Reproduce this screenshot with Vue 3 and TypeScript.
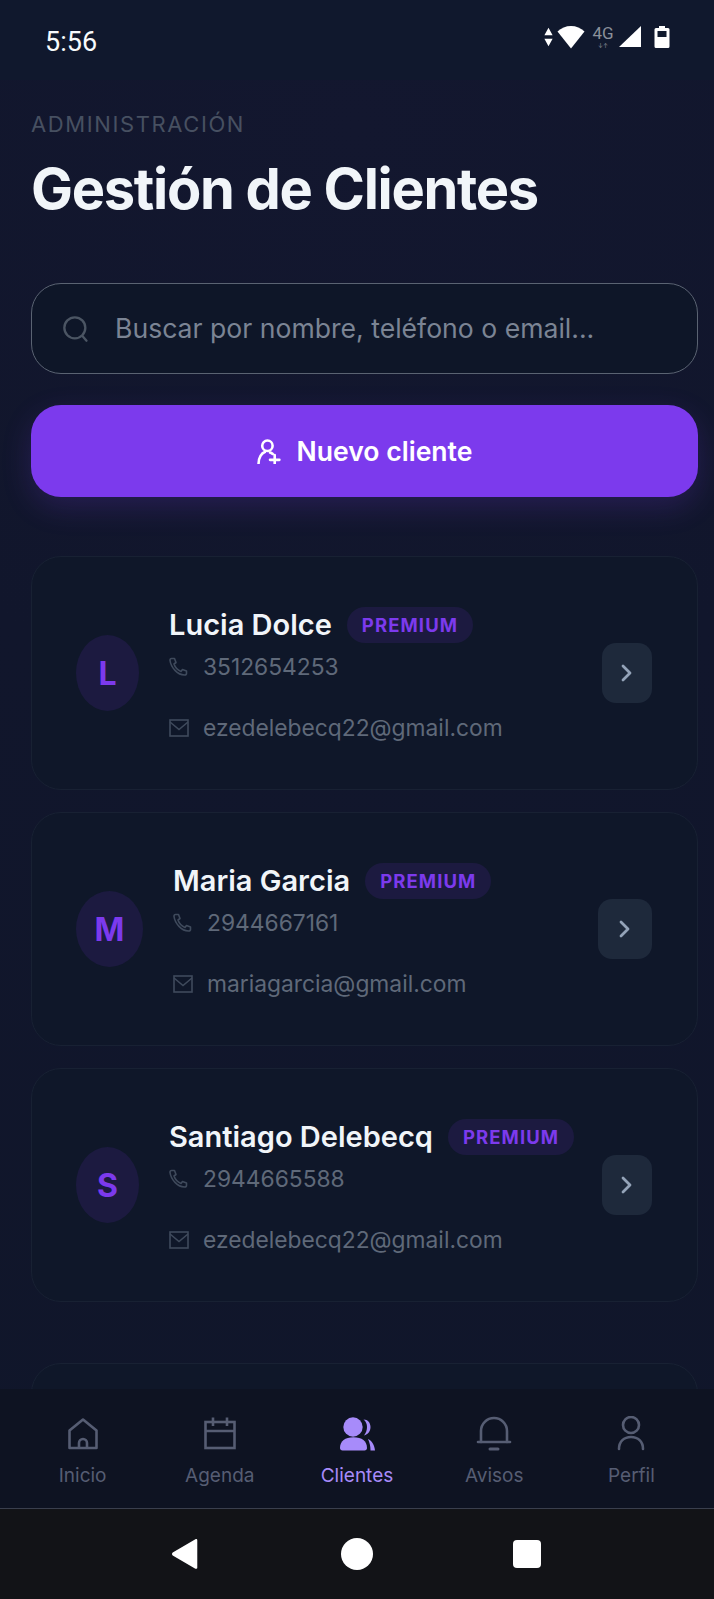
<script setup lang="ts">
interface Client { name: string; initial: string; phone: string; email: string; avatar: number; action: number; info: number }
const clients: Client[] = [
  { name: 'Lucia Dolce', initial: 'L', phone: '3512654253', email: 'ezedelebecq22@gmail.com', avatar: 63, action: 50, info: 402 },
  { name: 'Maria Garcia', initial: 'M', phone: '2944667161', email: 'mariagarcia@gmail.com', avatar: 67, action: 54, info: 394 },
  { name: 'Santiago Delebecq', initial: 'S', phone: '2944665588', email: 'ezedelebecq22@gmail.com', avatar: 63, action: 50, info: 402 },
]
const tabs = ['Inicio', 'Agenda', 'Clientes', 'Avisos', 'Perfil']
</script>

<template>
  <div class="phone">
    <div class="status">
      <span class="time">5:56</span>
      <div class="status-icons">
        <svg width="11" height="22" viewBox="0 0 12 22"><path d="M6 1 10.500 9h-9zM6 21 1.500 13h9z" fill="#fff"/></svg>
        <svg class="wifi" width="28" height="24" viewBox="0 0 28 24"><path d="M14 23.500 .5 6.500C4 3 9 1 14 1s10 2 13.500 5.500z" fill="#fff"/></svg>
        <div class="net"><span class="net-g">4G</span><span class="net-a">↓↑</span></div>
        <svg width="24" height="23" viewBox="0 0 24 23"><path d="M23 1v21H1z" fill="#fff"/></svg>
        <svg class="batt" width="16" height="23" viewBox="0 0 16 23"><path d="M5 1h6v2h3a1.500 1.500 0 0 1 1.500 1.500v17A1.500 1.500 0 0 1 14 23H2a1.500 1.500 0 0 1-1.500-1.500v-17A1.500 1.500 0 0 1 2 3h3z" fill="#fff"/><rect x="3.500" y="6" width="9" height="6" fill="#101a2e"/></svg>
      </div>
    </div>

    <main class="content">
      <p class="eyebrow">ADMINISTRACIÓN</p>
      <h1 class="title">Gestión de Clientes</h1>

      <div class="search">
        <svg class="search-icon" width="28" height="28" viewBox="0 0 24 24" fill="none" stroke="#4b5563" stroke-width="2" stroke-linecap="round"><circle cx="11" cy="11" r="9"/><path d="m21 22-3.500-4"/></svg>
        <span class="placeholder">Buscar por nombre, teléfono o email...</span>
      </div>

      <button class="new-btn">
        <svg width="25" height="25" viewBox="0 0 24 24" fill="none" stroke="#fff" stroke-width="2.500" stroke-linecap="round"><circle cx="10" cy="6.500" r="5"/><path d="M1.500 23.500c0-6 3-10 6-11M12.500 13c1 .3 1.800.8 2.500 1.300M17 15.500v9M12.500 20h9"/></svg>
        <span>Nuevo cliente</span>
      </button>

      <section class="list">
        <article v-for="c in clients" :key="c.name" class="card">
          <div class="avatar" :style="{ width: c.avatar + 'px' }">{{ c.initial }}</div>
          <div class="info" :style="{ width: c.info + 'px' }">
            <div class="name-row">
              <span class="name">{{ c.name }}</span>
              <span class="badge">PREMIUM</span>
            </div>
            <div class="line line-phone">
              <svg width="20" height="20" viewBox="0 0 20 20" fill="none" stroke="#3f4a5c" stroke-width="1.600" stroke-linecap="round" stroke-linejoin="round"><path d="M2.500 1.500h3l1.500 4-2 1.500c1 3 3.500 6 7 7.500l1.500-2 4 1.500v2.500c0 1-1 1.500-2 1.500C8.500 18 2 10.500 1 3.500c0-1 .5-2 1.500-2z"/></svg>
              <span>{{ c.phone }}</span>
            </div>
            <div class="line">
              <svg width="20" height="20" viewBox="0 0 20 20" fill="none" stroke="#3f4a5c" stroke-width="1.600"><rect x="1" y="2" width="18" height="16"/><path d="m1 4 9 7.500L19 4"/></svg>
              <span>{{ c.email }}</span>
            </div>
          </div>
          <div class="action" :style="{ width: c.action + 'px' }">
            <svg width="20" height="20" viewBox="0 0 20 20" fill="none" stroke="#94a3b8" stroke-width="2.800" stroke-linecap="round" stroke-linejoin="round"><path d="m6 3 7 7-7 7"/></svg>
          </div>
        </article>
        <article class="card card-next"></article>
      </section>
    </main>

    <nav class="tabs">
      <div v-for="(t, i) in tabs" :key="t" class="tab" :class="{ active: i === 2 }">
        <svg v-if="i === 0" width="36" height="36" viewBox="0 0 36 36" fill="none" stroke="currentColor" stroke-width="2.600" stroke-linejoin="round"><path d="M4.500 14.500 18 3.500l13.500 11V32h-27z"/><path d="M14 32v-5a4 4 0 0 1 8 0v5" /></svg>
        <svg v-else-if="i === 1" width="36" height="36" viewBox="0 0 36 36" fill="none" stroke="currentColor" stroke-width="2.600"><rect x="3.500" y="6" width="29" height="26"/><path d="M3.500 15h29M11 1.500V10M25 1.500V10"/></svg>
        <svg v-else-if="i === 2" width="36" height="36" viewBox="0 0 36 36" fill="currentColor"><circle cx="14" cy="11" r="9.700"/><path d="M1 32c0-7 5-10.800 13.500-10.800S28 25 28 32c0 1.500-1 2.500-2.500 2.500h-22C2 34.500 1 33.500 1 32z"/><path d="M24.500 3.500c4.500 0 7 3.500 7 7.500s-2.500 7.500-6.500 8.500c2-2.500 3-5.500 3-8.500s-1-5.500-3.500-7.500zM29 23c4 2 6.500 6 7 11.500h-4.500c0-4.500-.8-8-2.500-11.500z"/></svg>
        <svg v-else-if="i === 3" width="36" height="36" viewBox="0 0 36 36" fill="none" stroke="currentColor" stroke-width="2.600" stroke-linecap="round"><path d="M5 26V15a13 13 0 0 1 26 0v11"/><path d="M2 26h32"/><path d="M14 33h8" stroke-width="3"/></svg>
        <svg v-else width="36" height="36" viewBox="0 0 36 36" fill="none" stroke="currentColor" stroke-width="2.600" stroke-linecap="round"><circle cx="18" cy="9" r="8"/><path d="M6 33c0-7.500 5-12 12-12s12 4.500 12 12"/></svg>
        <span>{{ t }}</span>
      </div>
    </nav>

    <div class="sysbar">
      <svg width="32" height="34" viewBox="0 0 32 36"><path d="M29 3.500v29c0 1-1 1.500-2 1L3 19.500c-1-.8-1-2 0-3L27 2.500c1-.6 2-.2 2 1z" fill="#fff"/></svg>
      <div class="sys-home"></div>
      <div class="sys-square"></div>
    </div>
  </div>
</template>

<style>
html, body { margin: 0; background: #0f172a; }
</style>

<style scoped>
* { box-sizing: border-box; }
.phone {
  width: 714px;
  height: 1599px;
  display: flex;
  flex-direction: column;
  overflow: hidden;
  font-family: Inter, "Liberation Sans", sans-serif;
  background: radial-gradient(circle at 50% 8%, #13172f 0%, #11162c 40%, #10162a 100%);
}
.status {
  height: 80px;
  flex: none;
  display: flex;
  align-items: center;
  justify-content: space-between;
  padding: 0 44px 0 45px;
  background: #10182d;
}
.time { font-family: Roboto, sans-serif; font-size: 27px; color: #f8fafc; margin-top: 3px; }
.status-icons { display: flex; align-items: center; gap: 5px; margin-top: -7px; }
.wifi { margin-left: -2px; }
.net { width: 24px; margin: 0 -2px 0 1px; display: flex; flex-direction: column; align-items: center; line-height: 1; color: #8b909a; }
.net-g { font-size: 17px; font-family: Roboto, sans-serif; }
.net-a { font-size: 6px; margin-top: 1px; }
.batt { margin-left: 7px; }
.content { flex: 1; min-height: 0; overflow: hidden; padding: 30px 16px 0 31px; }
.eyebrow { margin: 0; font-size: 22px; line-height: 28px; letter-spacing: 1.600px; color: #475061; }
.title { margin: 18px 0 0; font-size: 56px; line-height: 66px; font-weight: 700; letter-spacing: -1.300px; color: #f1f5f9; }
.search {
  margin-top: 61px;
  height: 91px;
  border: 1px solid #5a6372;
  border-radius: 30px;
  background: #0e1628;
  display: flex;
  align-items: center;
  gap: 25px;
  padding: 0 0 0 30px;
}
.placeholder { font-size: 26.600px; color: #7b8494; margin-top: -2px; }
.new-btn {
  margin-top: 31px;
  width: 100%;
  height: 92px;
  border: 0;
  border-radius: 30px;
  background: #7c3aed;
  box-shadow: 0 10px 30px rgba(124, 58, 237, .2);
  color: #fff;
  font: 600 26.600px Inter, sans-serif;
  display: flex;
  align-items: center;
  justify-content: center;
  gap: 15px;
}
.list { margin-top: 59px; display: flex; flex-direction: column; gap: 22px; }
.card {
  height: 234px;
  flex: none;
  border: 1px solid #182133;
  border-radius: 30px;
  background: #0f1729;
  display: flex;
  align-items: center;
  gap: 30px;
  padding: 0 45px 0 44px;
}
.card-next { margin-top: 39px; }
.avatar {
  height: 76px;
  flex: none;
  border-radius: 50%;
  background: #1c1a40;
  color: #7c3aed;
  font-size: 32px;
  font-weight: 700;
  display: flex;
  align-items: center;
  justify-content: center;
}
.info { flex: none; display: flex; flex-direction: column; padding-top: 3px; }
.name-row { display: flex; align-items: center; gap: 15px; }
.name { font-size: 29px; font-weight: 600; color: #f1f5f9; white-space: nowrap; }
.badge {
  height: 36px;
  padding: 0 15px;
  border-radius: 18px;
  background: #1c1a40;
  color: #7c3aed;
  font-size: 18.500px;
  font-weight: 700;
  letter-spacing: 1.100px;
  display: flex;
  align-items: center;
}
.line { display: flex; align-items: center; gap: 14px; font-size: 22.800px; line-height: 30px; color: #5f6979; margin-top: 31px; }
.line-phone { margin-top: 9px; }
.action {
  height: 60px;
  flex: none;
  margin-left: auto;
  border-radius: 14px;
  background: #1e293b;
  display: flex;
  align-items: center;
  justify-content: center;
}
.tabs {
  flex: none;
  height: 120px;
  background: #0e1322;
  border-bottom: 1px solid #3a3f4d;
  display: flex;
  padding: 27px 14px 0 14px;
}
.tab { flex: 1; display: flex; flex-direction: column; align-items: center; gap: 12px; color: #565d73; font-size: 19px; line-height: 24px; }
.tab.active { color: #a78bfa; }
.sysbar {
  flex: none;
  height: 90px;
  background: #121317;
  display: flex;
  align-items: center;
  justify-content: center;
  gap: 140px;
  padding-right: 4px;
}
.sys-home { width: 32px; height: 32px; border-radius: 50%; background: #fff; }
.sys-square { width: 28px; height: 28px; border-radius: 4px; background: #fff; }
</style>
